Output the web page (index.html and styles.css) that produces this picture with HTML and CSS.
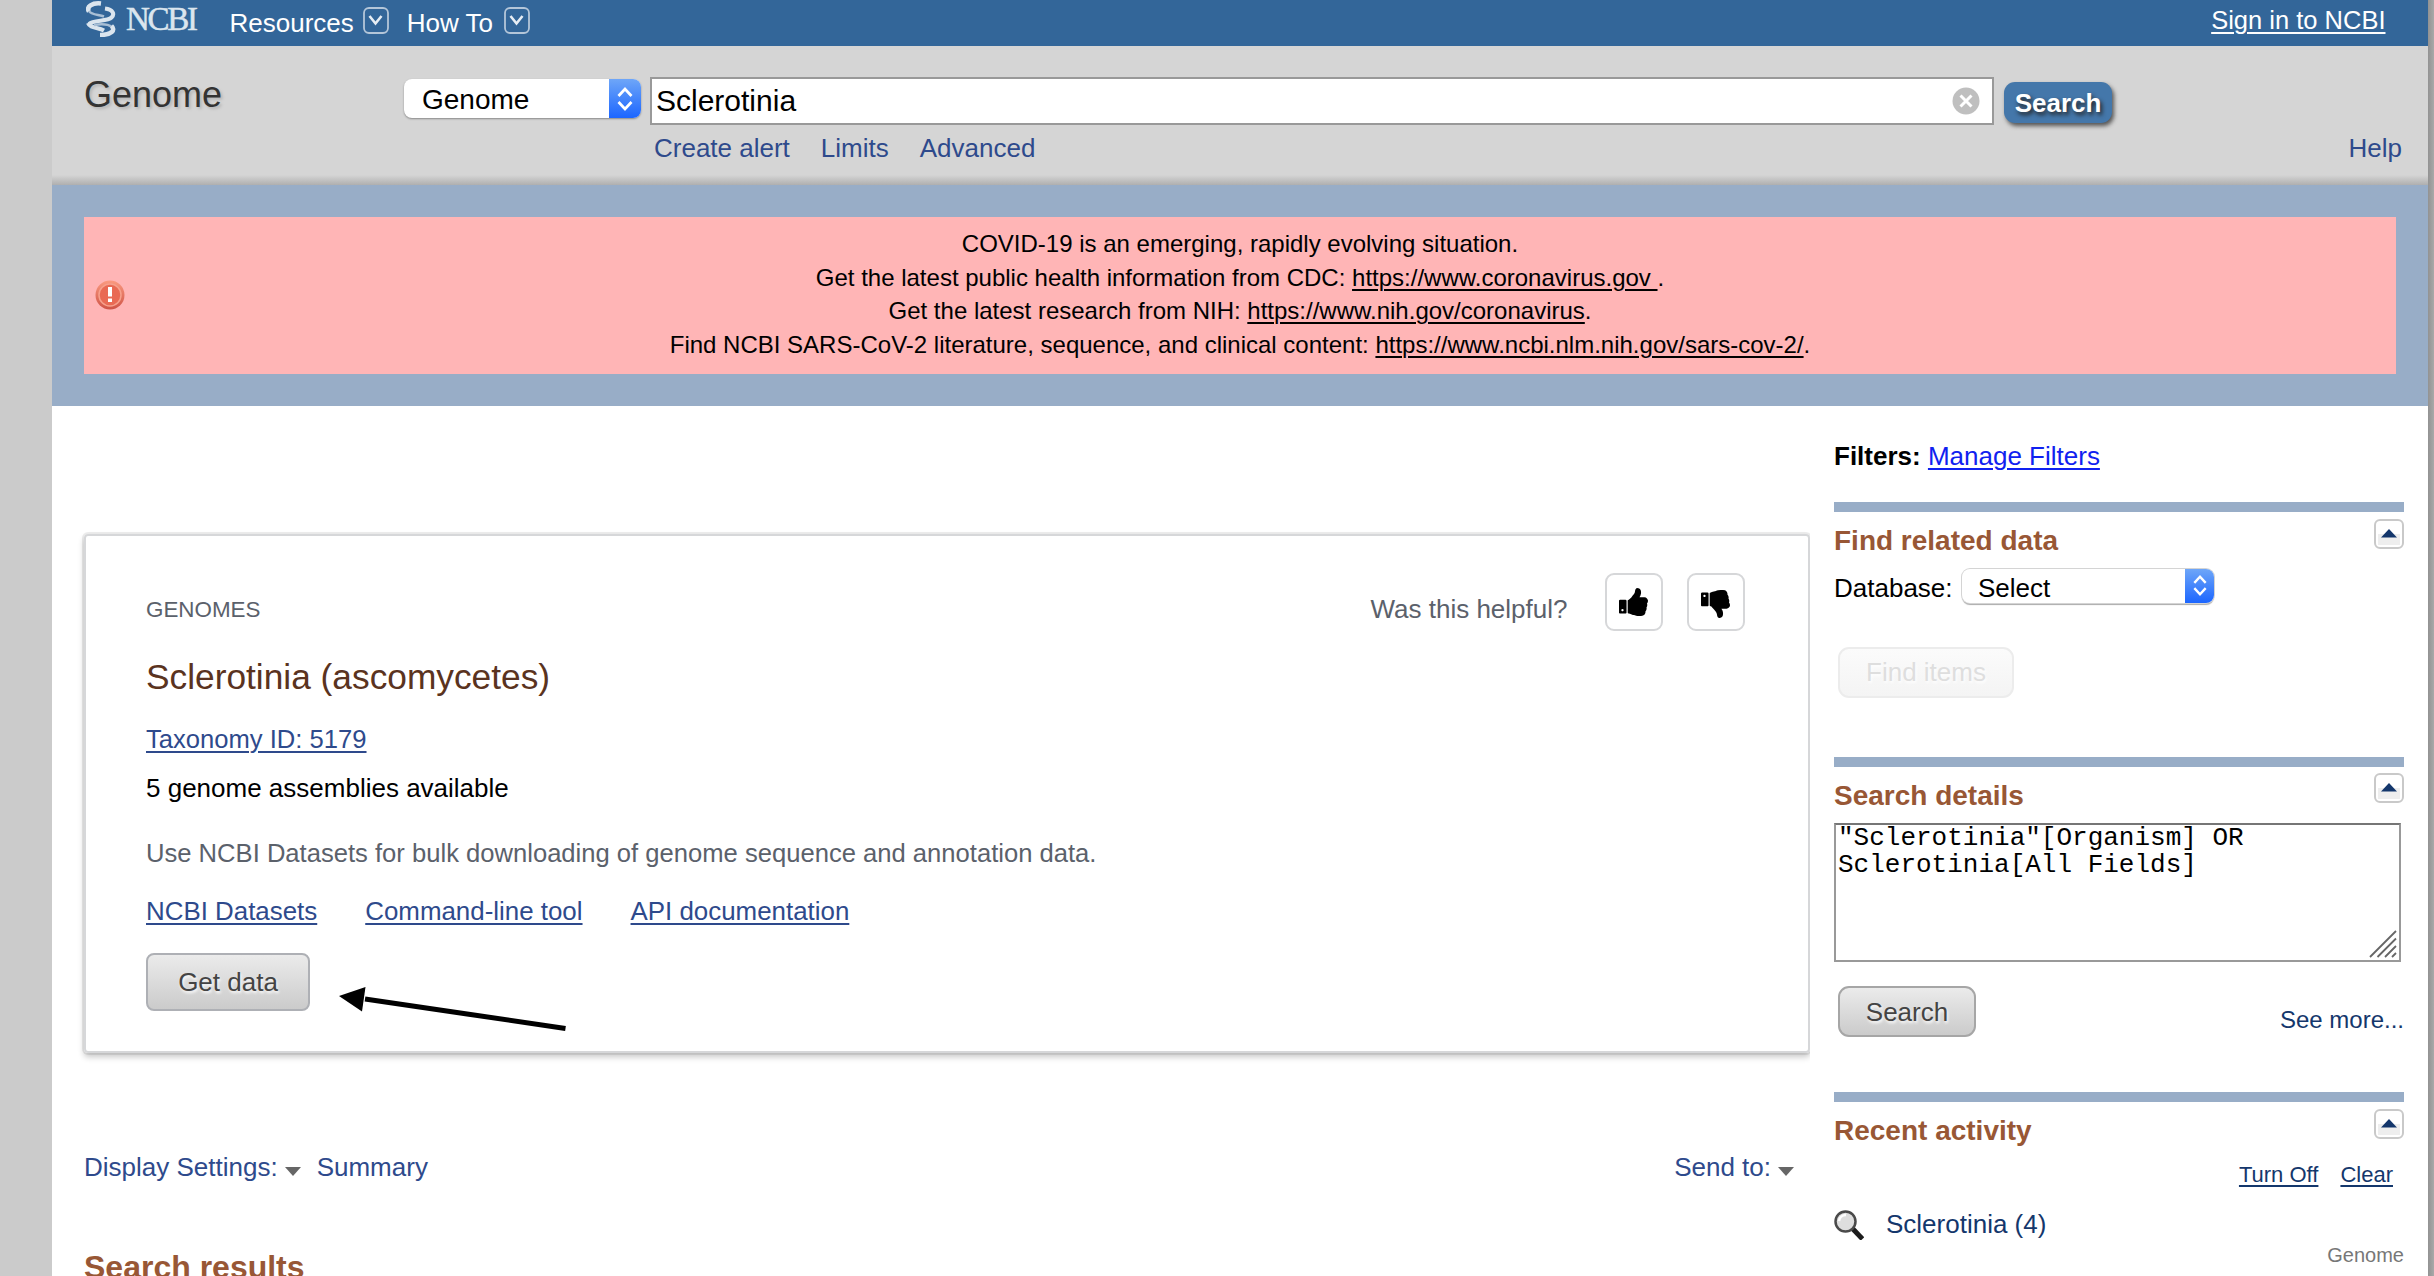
FILE: index.html
```html
<!DOCTYPE html>
<html lang="en">
<head>
<meta charset="utf-8">
<title>Sclerotinia - Genome - NCBI</title>
<link rel="stylesheet" href="styles.css">
</head>
<body>
<svg width="0" height="0" class="defs" aria-hidden="true">
  <defs>
    <symbol id="thumb" viewBox="128 128 1600 1536"><path fill-rule="evenodd" d="M384 1344q0-26-19-45t-45-19-45 19-19 45 19 45 45 19 45-19 19-45zm160-512v640q0 26-19 45t-45 19h-288q-26 0-45-19t-19-45v-640q0-26 19-45t45-19h288q26 0 45 19t19 45zm1184 0q0 86-55 149 15 44 15 76 3 76-43 137 17 56 0 117-15 57-54 94 9 112-49 181-64 76-197 78h-129q-66 0-144-15.500t-121.500-29-120.500-39.500q-123-43-158-44-26-1-45-19.500t-19-44.500v-641q0-25 18-43.500t43-20.500q24-2 76-59t101-121q68-87 101-120 18-18 31-48t17.500-48.500 13.500-60.500q7-39 12.500-61t19.500-52 34-50q19-19 45-19 46 0 82.500 10.500t60 26 40 40.500 24 45 12 50 5 45 .5 39q0 38-9.500 76t-19 60-27.500 56q-3 6-10 18t-11 22-8 24h277q78 0 135 57t57 135z"/></symbol>
    <symbol id="menu-box" viewBox="0 0 26 27"><rect x="1" y="1" width="24" height="25" rx="5" fill="none" stroke="#b4c6d9" stroke-width="1.800"/><path d="M6.500 9l6 7.500 6-7.500" fill="none" stroke="#e6edf4" stroke-width="2.600"/></symbol>
    <symbol id="steps" viewBox="0 0 16 24"><path d="M1.500 9L8 2l6.500 7M1.500 15L8 22l6.500-7" fill="none" stroke="#fff" stroke-width="2.700"/></symbol>
    <symbol id="caret" viewBox="0 0 16 9"><path d="M0 0h16L8 9z" fill="#666"/></symbol>
    <symbol id="fold" viewBox="0 0 30 30"><rect x="1" y="1" width="28" height="28" rx="5" fill="#fff" stroke="#c9c9c9" stroke-width="2"/><path d="M4 15h22v11H4z" fill="#eee"/><path d="M7 18.500l8-8.500 8 8.500z" fill="#14376c"/></symbol>
  </defs>
</svg>
<div class="page">
  <header class="topbar">
    <a class="logo">
      <svg width="30" height="37" viewBox="0 0 30 37" fill="none" stroke="#dbe5ee">
        <path d="M15 3.500C6 2.500 0 7 3 11.500" stroke-width="4.500"/>
        <path d="M3 11c2 4 10 3.500 15 5.500" stroke="#a9bfd5" stroke-width="2.500"/>
        <path d="M19 8.500c8 1 10 5.500 6.500 9-4 4-18 2.500-22.500 6.500" stroke-width="4"/>
        <path d="M2 23c2 5.500 10 4 16 7.500" stroke-width="4"/>
        <path d="M8 25c6-1 14-1 18 2" stroke="#a9bfd5" stroke-width="2.500"/>
        <path d="M25.500 26c4.500 4 0 9-11.500 9" stroke-width="4.500"/>
      </svg>
      <span class="logo-text">NCBI</span>
    </a>
    <span class="menu">Resources<svg class="menu-icon"><use href="#menu-box"/></svg></span>
    <span class="menu menu-how">How To<svg class="menu-icon"><use href="#menu-box"/></svg></span>
    <a class="sign-in">Sign in to NCBI</a>
  </header>

  <section class="search-area">
    <h1 class="db-title">Genome</h1>
    <div class="search-form">
      <div class="search-row">
        <div class="select select-db"><span>Genome</span><i class="select-end"><svg width="16" height="24"><use href="#steps"/></svg></i></div>
        <div class="term"><span>Sclerotinia</span>
          <svg width="28" height="28" viewBox="0 0 28 28"><circle cx="14" cy="14" r="13.500" fill="#bfbfbf"/><path d="M8.500 8.500l11 11m0-11l-11 11" stroke="#fff" stroke-width="3"/></svg>
        </div>
        <div class="search-button">Search</div>
      </div>
      <nav class="search-links"><a>Create alert</a><a>Limits</a><a>Advanced</a><a class="help">Help</a></nav>
    </div>
  </section>

  <section class="banner">
    <div class="notice">
      <svg class="notice-icon" width="30" height="30" viewBox="0 0 30 30">
        <defs><linearGradient id="red" x2="0" y2="1"><stop offset="0" stop-color="#fa9a80"/><stop offset="1" stop-color="#cf5346"/></linearGradient></defs>
        <circle cx="15" cy="15" r="14.500" fill="url(#red)"/><circle cx="15" cy="15" r="11" fill="#e96a54" stroke="#f6a08c" stroke-width="1.500"/>
        <path d="M13 7h4v9.500h-4zM13 18.500h4v3.500h-4z" fill="#fff"/>
      </svg>
      <div class="notice-text">
        <p>COVID-19 is an emerging, rapidly evolving situation.</p>
        <p>Get the latest public health information from CDC: <a>https://www.coronavirus.gov&nbsp;</a>.</p>
        <p>Get the latest research from NIH: <a>https://www.nih.gov/coronavirus</a>.</p>
        <p>Find NCBI SARS-CoV-2 literature, sequence, and clinical content: <a>https://www.ncbi.nlm.nih.gov/sars-cov-2/</a>.</p>
      </div>
    </div>
  </section>

  <div class="content">
    <main class="main">
      <article class="card">
        <div class="card-top">
          <span class="eyebrow">GENOMES</span>
          <span class="helpful">Was this helpful?</span>
          <span class="vote"><svg width="29" height="28"><use href="#thumb"/></svg></span>
          <span class="vote vote-down"><svg width="29" height="28"><use href="#thumb"/></svg></span>
        </div>
        <h2 class="organism">Sclerotinia (ascomycetes)</h2>
        <p class="taxonomy"><a>Taxonomy ID: 5179</a></p>
        <p class="assemblies">5 genome assemblies available</p>
        <p class="hint">Use NCBI Datasets for bulk downloading of genome sequence and annotation data.</p>
        <p class="tools"><a>NCBI Datasets</a><a>Command-line tool</a><a>API documentation</a></p>
        <div class="get-data">Get data</div>
        <svg class="arrow" width="230" height="48" viewBox="0 0 230 48"><path d="M26 14L226.500 43.500" stroke="#000" stroke-width="5"/><path d="M0 11L26.500 2 23 26.500z"/></svg>
      </article>
      <div class="display-bar">
        <span>Display Settings:</span><svg class="caret" width="16" height="9"><use href="#caret"/></svg><span class="summary">Summary</span>
        <span class="send">Send to:</span><svg class="caret caret-send" width="16" height="9"><use href="#caret"/></svg>
      </div>
      <h2 class="results">Search results</h2>
    </main>

    <aside class="side">
      <p class="filters"><b>Filters:</b> <a>Manage Filters</a></p>
      <section class="portlet related">
        <header class="portlet-head"><h3>Find related data</h3><svg width="30" height="30"><use href="#fold"/></svg></header>
        <div class="database"><span>Database:</span>
          <div class="select select-related"><span>Select</span><i class="select-end"><svg width="14" height="21"><use href="#steps"/></svg></i></div>
        </div>
        <div class="button button-off">Find items</div>
      </section>
      <section class="portlet details">
        <header class="portlet-head"><h3>Search details</h3><svg width="30" height="30"><use href="#fold"/></svg></header>
        <div class="query">"Sclerotinia"[Organism] OR<br>Sclerotinia[All Fields]
          <svg class="grip" width="28" height="28" viewBox="0 0 28 28"><path d="M1 27L27 1M8.500 27L27 8.500M16 27L27 16M23 27l4-4" stroke="#666" stroke-width="1.800"/></svg>
        </div>
        <div class="details-foot"><div class="button">Search</div><a>See more...</a></div>
      </section>
      <section class="portlet">
        <header class="portlet-head"><h3>Recent activity</h3><svg width="30" height="30"><use href="#fold"/></svg></header>
        <p class="activity-actions"><a>Turn Off</a><a>Clear</a></p>
        <div class="activity">
          <svg width="30" height="30" viewBox="0 0 30 30"><path d="M18 18l10.500 11" stroke="#1c1c1c" stroke-width="5"/><circle cx="11.500" cy="11.500" r="10" fill="#dedede" stroke="#4a4a4a" stroke-width="2.500"/><path d="M5 11a7 7 0 0 1 7-6" stroke="#fff" stroke-width="2.500" fill="none"/></svg>
          <a>Sclerotinia (4)</a>
        </div>
        <p class="activity-db">Genome</p>
      </section>
    </aside>
  </div>
</div>
</body>
</html>
```
FILE: styles.css
```css
* { box-sizing: border-box; }
body, h1, h2, h3, p { margin: 0; }
body {
  height: 1276px;
  overflow: hidden;
  display: flex;
  background: linear-gradient(90deg, #929292, #a9a9a9) right / 6px 100% no-repeat #cbcbcb;
  font: 26px/30px "Liberation Sans", Arial, sans-serif;
  color: #000;
}
p, span, a, h1, h2, h3 { white-space: nowrap; }
svg { display: block; flex: none; }
.defs { position: absolute; }
a { text-decoration-thickness: 2px; text-underline-offset: 3px; }

.page { width: 2376px; height: 1276px; margin-left: 52px; background: #fff; overflow: hidden; }

.topbar { display: flex; align-items: flex-start; height: 46px; padding: 0 42.500px 0 34px; background: #336699; color: #fff; }
.logo { display: flex; width: 143.500px; gap: 10px; }
.logo-text { margin-top: 2px; font: 33px/34px "Liberation Serif", serif; letter-spacing: -2.300px; color: #dbe5ee; -webkit-text-stroke: .5px #dbe5ee; }
.menu { display: flex; gap: 9px; margin-top: 8px; }
.menu-how { margin-left: 18px; gap: 11px; }
.menu-icon { width: 26px; height: 27px; margin-top: -1.500px; }
.sign-in { margin: 5px 0 0 auto; font-size: 25.500px; text-decoration-line: underline; }

.search-area {
  display: flex;
  height: 139px;
  padding: 31px 26px 0 32px;
  background: linear-gradient(#d5d5d500, #afafaf) bottom / 100% 10px no-repeat #d5d5d5;
}
.db-title { width: 320px; padding-top: 1px; font-size: 36px; font-weight: normal; color: #333; text-shadow: 2px 2px 3px #b4b4b4; line-height: 34px; }
.search-form { flex: 1; }
.search-row { display: flex; align-items: flex-start; }
.select { display: flex; justify-content: space-between; border-radius: 8px; background: #fff; box-shadow: 0 1px 2px #888; overflow: hidden; }
.select-end { display: flex; align-items: center; justify-content: center; background: linear-gradient(#6ea6f8, #1c66ff); }
.select-db { width: 237px; height: 39px; margin: 2px 9px 0 0; padding-left: 18px; font-size: 28px; line-height: 42px; }
.select-db .select-end { width: 32px; }
.term { display: flex; align-items: center; justify-content: space-between; width: 1344px; height: 48px; padding: 0 12px 0 4px; border: 2px solid #999; background: #fff; font-size: 30px; line-height: 44px; }
.search-button { width: 108px; height: 41px; margin: 5px 0 0 10px; border-radius: 11px; background: #4477aa; box-shadow: 2px 3px 4px #555; color: #fff; font-weight: bold; line-height: 42px; text-align: center; text-shadow: 2px 3px 4px #222; }
.search-links { display: flex; gap: 31px; margin: 8px 0 0 250px; color: #2e4a8c; }
.help { margin-left: auto; }

.banner { height: 221px; padding: 32px; background: #98adc7; }
.notice { display: flex; align-items: center; height: 157px; background: #ffb5b6; padding: 0 11px; }
.notice-icon { margin-top: -2px; }
.notice-text { flex: 1; margin: -3px 30px 0 0; font-size: 24px; line-height: 33.500px; text-align: center; }
.notice-text a { text-decoration-line: underline; }

.content { display: flex; gap: 24px; }
.main { width: 1758px; height: 870px; padding-left: 32px; overflow: hidden; }
.card { position: relative; height: 519px; margin-top: 128px; padding: 37px 63px 0 60px; border: 2px solid #d6d7d9; border-radius: 4px; box-shadow: 0 0 0 2px rgba(0,0,0,.07), 0 4px 6px rgba(0,0,0,.22); }
.card-top { display: flex; }
.eyebrow { margin: 22px auto 0 0; font-size: 22.400px; color: #5b616b; }
.helpful { margin: 21px 37.500px 0 0; color: #5b616b; }
.vote { display: flex; align-items: center; justify-content: center; width: 58px; height: 58px; padding-right: 2px; border: 2px solid #d6d7d9; border-radius: 9px; }
.vote-down { margin-left: 24px; padding-top: 3px; }
.vote-down svg { transform: scaleY(-1); }
.organism { margin-top: 26px; font-size: 35.300px; line-height: 40px; font-weight: normal; color: #5a3320; }
.taxonomy { margin-top: 27px; font-size: 25.600px; }
.assemblies { margin-top: 19px; }
.hint { margin-top: 35px; font-size: 25.600px; color: #5b616b; }
.tools { display: flex; gap: 48px; margin-top: 28px; font-size: 25.900px; }
.taxonomy a, .tools a { color: #2e4a8c; text-decoration-line: underline; }
.get-data { width: 164px; height: 58px; margin-top: 27px; border: 2px solid #aeb0b5; border-radius: 8px; background: linear-gradient(#ebebeb, #cbcbcb); color: #444; line-height: 54px; text-align: center; text-shadow: 1px 2px 3px #fff; }
.arrow { position: absolute; left: 252.500px; top: 449px; }
.display-bar { display: flex; margin-top: 99px; color: #2e4a8c; }
.caret { margin: 15px 0 0 7px; }
.summary { margin-left: 16px; }
.send { margin-left: auto; }
.caret-send { margin-right: 16px; }
.results { margin-top: 65px; font-size: 32px; line-height: 40px; color: #985735; }

.side { width: 570px; padding-top: 35px; }
.filters { margin-bottom: 31px; }
.filters a { color: #1021f0; text-decoration-line: underline; }
.portlet { border-top: 10px solid #98adc7; }
.portlet-head { display: flex; justify-content: space-between; height: 44px; padding-top: 7px; }
.portlet-head h3 { margin-top: 6px; font-size: 28px; line-height: 32px; color: #985735; }
.database { display: flex; margin-top: 12.500px; }
.database > span { width: 128px; margin-top: 4.500px; }
.select-related { width: 252px; height: 34px; padding-left: 16px; line-height: 38px; box-shadow: 0 0 0 1px #d4d4d4, 0 2px 1px #aaa; }
.select-related .select-end { width: 29px; }
.button { width: 138px; height: 51px; margin-left: 4px; border: 2px solid #a6a6a6; border-radius: 11px; background: linear-gradient(#ebebeb, #cbcbcb); color: #444; line-height: 48px; text-align: center; text-shadow: 1px 2px 3px #fff; }
.button-off { width: 176px; margin-top: 43.500px; border-color: #ececec; background: linear-gradient(#fbfbfb, #f4f4f4); color: #dedede; line-height: 47px; }
.related { height: 255px; }
.details { height: 335px; }
.details .portlet-head { padding-top: 6px; }
.details .portlet-head h3 { margin-top: 7px; }
.query { position: relative; width: 567px; height: 139px; margin-top: 12px; padding: 0 2px; border: 2px solid #999; border-top-color: #767676; font: 26px/27px "Liberation Mono", "Courier New", monospace; }
.grip { position: absolute; right: 2px; bottom: 2px; }
.details-foot { display: flex; justify-content: space-between; margin-top: 24px; }
.details-foot a { margin-top: 20px; font-size: 24px; line-height: 28px; color: #14376c; }
.activity-actions { display: flex; justify-content: flex-end; gap: 22px; margin: 16px 11px 0 0; font-size: 22px; line-height: 26px; color: #14376c; }
.activity-actions a { text-decoration-line: underline; }
.activity { display: flex; gap: 22px; margin-top: 21px; color: #14376c; }
.activity svg { margin-top: 1px; }
.activity-db { margin-top: 3px; font-size: 20px; line-height: 24px; color: #777; text-align: right; }
```
